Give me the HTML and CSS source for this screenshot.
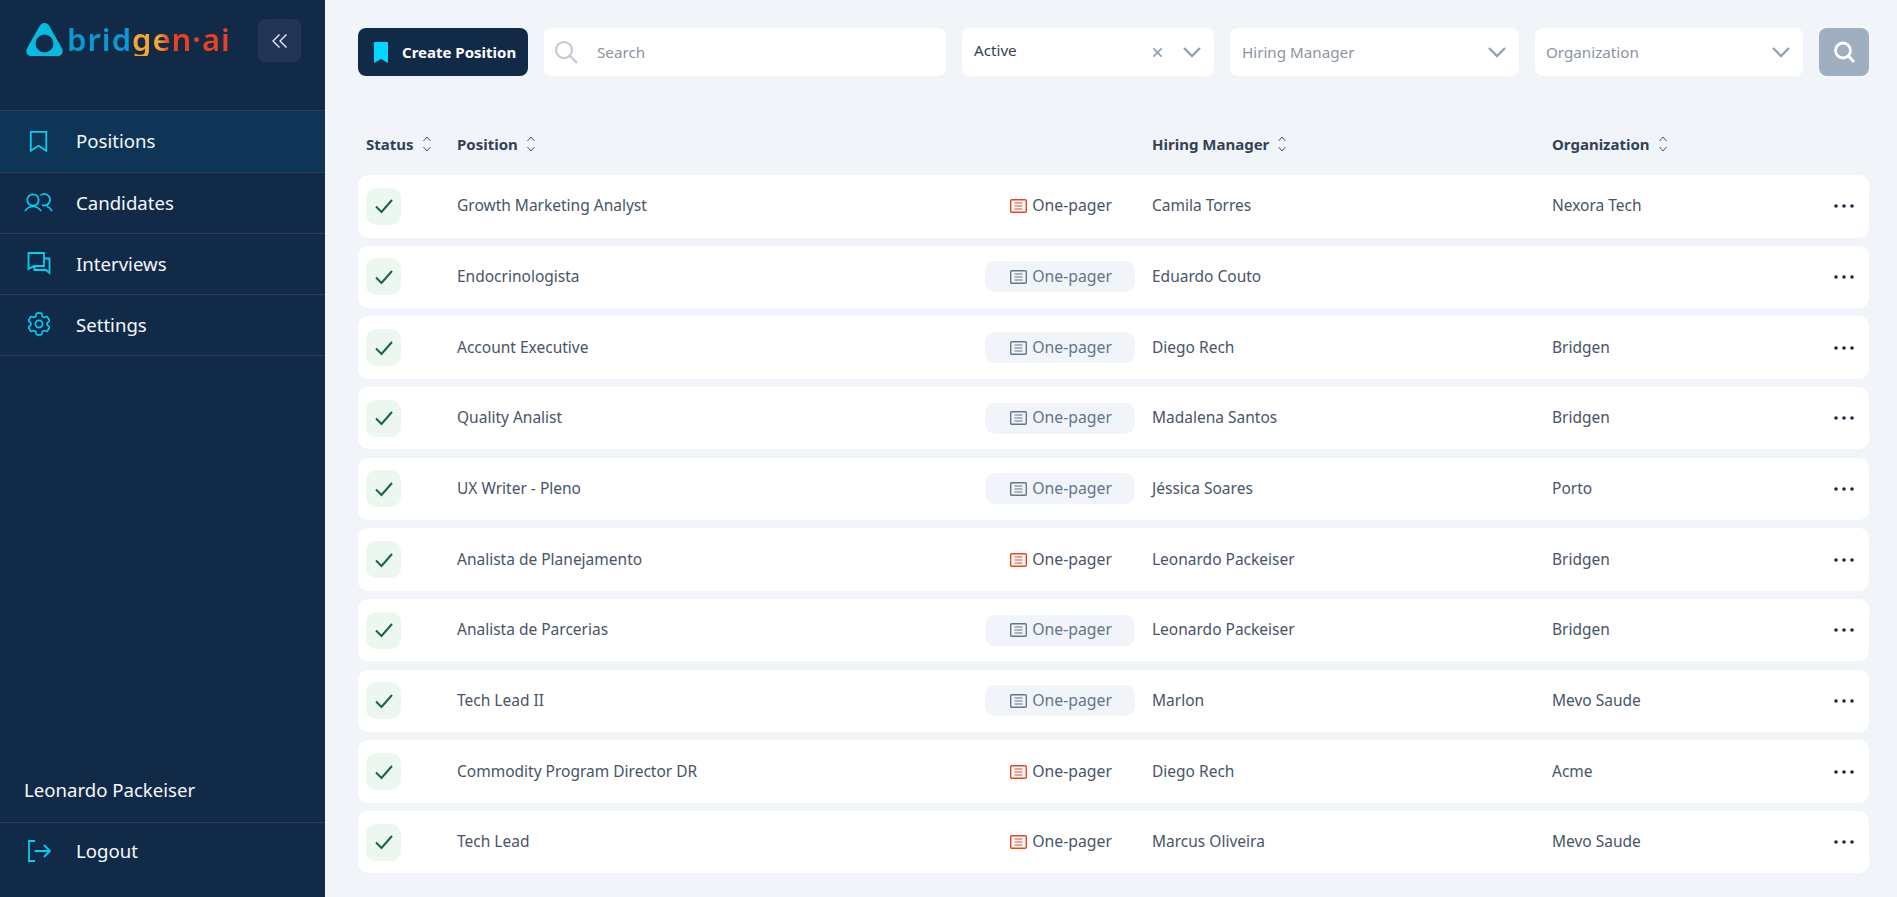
FILE: index.html
```html
<!DOCTYPE html>
<html>

<head>
	<meta charset="UTF-8">
	<title>Positions</title>
	<link rel="stylesheet" href="styles.css">
</head>

<body>
	<svg class="defs" width="0" height="0">
		<symbol id="sort" viewBox="0 0 10 18">
			<path d="M1.5 6L5 2l3.5 4M1.5 12L5 16l3.5-4" fill="none" stroke="currentColor" stroke-width="1" />
		</symbol>
		<symbol id="doc" viewBox="0 0 17 14">
			<rect x="0.7" y="0.7" width="15.6" height="12.6" rx="1" fill="none" stroke="currentColor" stroke-width="1.4" />
			<path d="M4.5 4h8M4.5 7h8M4.500 10h8" fill="none" stroke="currentColor" stroke-width="1.2" />
		</symbol>
		<symbol id="check" viewBox="0 0 20 20">
			<path d="M2 10.500l5.500 5.500L18 4" fill="none" stroke="currentColor" stroke-width="2" />
		</symbol>
		<symbol id="chev" viewBox="0 0 20 12">
			<path d="M2 2l8 8 8-8" fill="none" stroke="currentColor" stroke-width="2.4" />
		</symbol>
		<symbol id="dots" viewBox="0 0 20 4">
			<circle cx="2" cy="2" r="1.800" fill="currentColor" />
			<circle cx="10" cy="2" r="1.800" fill="currentColor" />
			<circle cx="18" cy="2" r="1.800" fill="currentColor" />
		</symbol>
	</svg>

	<div class="app">
		<aside class="sidebar">
			<div class="brand">
				<div class="logo">
					<svg class="logoMark" viewBox="0 0 37 33">
						<path fill-rule="evenodd" fill="#05bce0" d="M18.500 0c2.500 0 4 1.500 5 3.300L35.800 25c2 3.800.3 8-4.300 8H5.500c-4.600 0-6.300-4.200-4.300-8L13.500 3.300C14.500 1.500 16 0 18.500 0zM18.500 11.500a9 9 0 1 0 0 18 9 9 0 0 0 0-18z" />
					</svg>
					<span class="logoText">bridgen·ai</span>
				</div>
				<button class="collapseBtn">
					<svg viewBox="0 0 16 16" width="16" height="16">
						<path d="M7.500 1.500L1 8l6.500 6.500M14.500 1.500L8 8l6.500 6.500" fill="none" stroke="#f0f6fc" stroke-width="1.300" />
					</svg>
				</button>
			</div>

			<nav class="nav">
				<a class="navItem active">
					<svg class="navIcon" viewBox="0 0 24 24"><path d="M3.800 2.800h15.500v19l-7.750-5-7.750 5z" /></svg>
					Positions
				</a>
				<a class="navItem">
					<svg class="navIcon wide" viewBox="0 0 30 20">
						<circle cx="10" cy="8" r="5.700" />
						<path d="M2 19c2-3 5-4.500 8-4.500s6 1.500 8 4.500M17.500 3.400a5.700 5.700 0 1 1 1.500 9.600M24 14.500c2 .5 3.500 2 5 4.500" />
					</svg>
					Candidates
				</a>
				<a class="navItem">
					<svg class="navIcon" viewBox="0 0 24 24">
						<path d="M1.500 2H17v13H7l-5.500 3zM17 7.500h5.500V22L19 19H7.500v-4" />
					</svg>
					Interviews
				</a>
				<a class="navItem">
					<svg class="navIcon gear" viewBox="2 2 20 20">
						<path d="M9.594 3.940c.09-.542.56-.94 1.110-.94h2.593c.55 0 1.020.398 1.110.94l.213 1.281c.063.374.313.686.645.87.074.04.147.083.22.127.325.196.72.257 1.075.124l1.217-.456a1.125 1.125 0 0 1 1.370.49l1.296 2.247a1.125 1.125 0 0 1-.26 1.431l-1.003.827c-.293.241-.438.613-.43.992a7.723 7.723 0 0 1 0 .255c-.008.378.137.75.43.991l1.004.827c.424.35.534.955.26 1.430l-1.298 2.247a1.125 1.125 0 0 1-1.369.491l-1.217-.456c-.355-.133-.75-.072-1.076.124a6.470 6.470 0 0 1-.22.128c-.331.183-.581.495-.644.869l-.213 1.281c-.09.543-.56.94-1.110.94h-2.594c-.55 0-1.019-.398-1.110-.94l-.213-1.281c-.062-.374-.312-.686-.644-.87a6.520 6.520 0 0 1-.22-.127c-.325-.196-.72-.257-1.076-.124l-1.217.456a1.125 1.125 0 0 1-1.369-.49l-1.297-2.247a1.125 1.125 0 0 1 .26-1.431l1.004-.827c.292-.24.437-.613.43-.991a6.932 6.932 0 0 1 0-.255c.007-.38-.138-.751-.43-.992l-1.004-.827a1.125 1.125 0 0 1-.26-1.430l1.297-2.247a1.125 1.125 0 0 1 1.370-.491l1.216.456c.356.133.751.072 1.076-.124.072-.044.146-.086.22-.128.332-.183.582-.495.644-.869l.214-1.280Z" />
						<path d="M15 12a3 3 0 1 1-6 0 3 3 0 0 1 6 0Z" />
					</svg>
					Settings
				</a>
			</nav>

			<div class="sideFoot">
				<div class="userName">Leonardo Packeiser</div>
				<a class="navItem logout">
					<svg class="navIcon" viewBox="0 0 24 24"><path d="M8 2H2v20h6M7.500 12H23M17 6l6 6-6 6" /></svg>
					Logout
				</a>
			</div>
		</aside>

		<main class="main">
			<div class="toolbar">
				<button class="createBtn">
					<svg viewBox="0 0 14 22" width="14" height="22"><path fill="#00d8ff" d="M0 1h14v21l-7-4-7 4z" /></svg>
					Create Position
				</button>
				<div class="field searchField">
					<svg class="searchIcon" viewBox="0 0 24 24" width="24" height="24">
						<circle cx="10" cy="10" r="8" />
						<path d="M16 16l7 7" />
					</svg>
					<span class="placeholder">Search</span>
				</div>
				<div class="field selectActive">
					<span class="value">Active</span>
					<svg class="clear" viewBox="0 0 12 12" width="11" height="11"><path d="M1.500 1.500l9 9M10.500 1.500l-9 9" /></svg>
					<svg class="chev"><use href="#chev" /></svg>
				</div>
				<div class="field selectManager">
					<span class="placeholder">Hiring Manager</span>
					<svg class="chev"><use href="#chev" /></svg>
				</div>
				<div class="field selectOrg">
					<span class="placeholder">Organization</span>
					<svg class="chev"><use href="#chev" /></svg>
				</div>
				<button class="goBtn">
					<svg viewBox="0 0 24 24" width="24" height="24">
						<circle cx="11" cy="10.500" r="7.500" />
						<path d="M16.500 16l5.500 6" />
					</svg>
				</button>
			</div>

			<div class="tableHead">
				<div class="th">Status <svg class="sort"><use href="#sort" /></svg></div>
				<div class="th">Position <svg class="sort"><use href="#sort" /></svg></div>
				<div></div>
				<div class="th">Hiring Manager <svg class="sort"><use href="#sort" /></svg></div>
				<div class="th">Organization <svg class="sort"><use href="#sort" /></svg></div>
				<div></div>
			</div>

			<div class="rows">
				<div class="row">
					<div class="statusBox"><svg><use href="#check" /></svg></div>
					<div class="cell">Growth Marketing Analyst</div>
					<div class="pager"><svg><use href="#doc" /></svg>One-pager</div>
					<div class="cell">Camila Torres</div>
					<div class="cell">Nexora Tech</div>
					<svg class="more"><use href="#dots" /></svg>
				</div>
				<div class="row">
					<div class="statusBox"><svg><use href="#check" /></svg></div>
					<div class="cell">Endocrinologista</div>
					<div class="pager empty"><svg><use href="#doc" /></svg>One-pager</div>
					<div class="cell">Eduardo Couto</div>
					<div class="cell"></div>
					<svg class="more"><use href="#dots" /></svg>
				</div>
				<div class="row">
					<div class="statusBox"><svg><use href="#check" /></svg></div>
					<div class="cell">Account Executive</div>
					<div class="pager empty"><svg><use href="#doc" /></svg>One-pager</div>
					<div class="cell">Diego Rech</div>
					<div class="cell">Bridgen</div>
					<svg class="more"><use href="#dots" /></svg>
				</div>
				<div class="row">
					<div class="statusBox"><svg><use href="#check" /></svg></div>
					<div class="cell">Quality Analist</div>
					<div class="pager empty"><svg><use href="#doc" /></svg>One-pager</div>
					<div class="cell">Madalena Santos</div>
					<div class="cell">Bridgen</div>
					<svg class="more"><use href="#dots" /></svg>
				</div>
				<div class="row">
					<div class="statusBox"><svg><use href="#check" /></svg></div>
					<div class="cell">UX Writer - Pleno</div>
					<div class="pager empty"><svg><use href="#doc" /></svg>One-pager</div>
					<div class="cell">Jéssica Soares</div>
					<div class="cell">Porto</div>
					<svg class="more"><use href="#dots" /></svg>
				</div>
				<div class="row">
					<div class="statusBox"><svg><use href="#check" /></svg></div>
					<div class="cell">Analista de Planejamento</div>
					<div class="pager"><svg><use href="#doc" /></svg>One-pager</div>
					<div class="cell">Leonardo Packeiser</div>
					<div class="cell">Bridgen</div>
					<svg class="more"><use href="#dots" /></svg>
				</div>
				<div class="row">
					<div class="statusBox"><svg><use href="#check" /></svg></div>
					<div class="cell">Analista de Parcerias</div>
					<div class="pager empty"><svg><use href="#doc" /></svg>One-pager</div>
					<div class="cell">Leonardo Packeiser</div>
					<div class="cell">Bridgen</div>
					<svg class="more"><use href="#dots" /></svg>
				</div>
				<div class="row">
					<div class="statusBox"><svg><use href="#check" /></svg></div>
					<div class="cell">Tech Lead II</div>
					<div class="pager empty"><svg><use href="#doc" /></svg>One-pager</div>
					<div class="cell">Marlon</div>
					<div class="cell">Mevo Saude</div>
					<svg class="more"><use href="#dots" /></svg>
				</div>
				<div class="row">
					<div class="statusBox"><svg><use href="#check" /></svg></div>
					<div class="cell">Commodity Program Director DR</div>
					<div class="pager"><svg><use href="#doc" /></svg>One-pager</div>
					<div class="cell">Diego Rech</div>
					<div class="cell">Acme</div>
					<svg class="more"><use href="#dots" /></svg>
				</div>
				<div class="row">
					<div class="statusBox"><svg><use href="#check" /></svg></div>
					<div class="cell">Tech Lead</div>
					<div class="pager"><svg><use href="#doc" /></svg>One-pager</div>
					<div class="cell">Marcus Oliveira</div>
					<div class="cell">Mevo Saude</div>
					<svg class="more"><use href="#dots" /></svg>
				</div>
			</div>
		</main>
	</div>
</body>

</html>
```

FILE: styles.css
```css
* {
	box-sizing: border-box;
}

html, body {
	margin: 0;
	height: 100%;
}

body {
	background: #f1f5f9;
	font-family: "Noto Sans", "Open Sans", sans-serif;
	font-size: 15.500px;
	color: #475569;
	overflow: hidden;
}

.defs {
	position: absolute;
}

.app {
	display: flex;
	height: 897px;
}

.sidebar {
	width: 325px;
	flex: none;
	background: #112a47;
	color: #f4f8fc;
	display: flex;
	flex-direction: column;
}

.brand {
	height: 110px;
	padding: 19px 24px 0 26px;
	display: flex;
	justify-content: space-between;
	align-items: flex-start;
}

.logo {
	display: flex;
	align-items: flex-start;
	gap: 4px;
	padding-top: 4px;
}

.logoMark {
	width: 37px;
	height: 33px;
	flex: none;
}

.logoText {
	font-family: "Noto Sans", sans-serif;
	font-size: 31px;
	font-weight: 600;
	line-height: 33px;
	letter-spacing: 1px;
	background: linear-gradient(90deg, #0b99d3 0, #0b99d3 39.500%, #f5a531 40.500%, #f5a531 56%, #e8421f 62%, #e8421f 100%);
	-webkit-background-clip: text;
	background-clip: text;
	color: transparent;
}

.collapseBtn {
	width: 43px;
	height: 43px;
	border: none;
	border-radius: 7px;
	background: #243358;
	display: flex;
	align-items: center;
	justify-content: center;
	padding: 0;
}

.nav {
	border-top: 1px solid #2a4060;
}

.navItem {
	height: 61px;
	display: flex;
	align-items: center;
	gap: 25px;
	padding: 0 0 2px 27px;
	font-size: 18.600px;
	border-bottom: 1px solid #2a4060;
}

.navItem.active {
	background: #0e3555;
	height: 62px;
}

.navIcon {
	width: 24px;
	height: 24px;
	flex: none;
	fill: none;
	stroke: #04cdf2;
	stroke-width: 1.800;
}

.navIcon.wide {
	width: 30px;
	height: 20px;
	margin-left: -4px;
	margin-right: -2px;
	stroke-width: 1.700;
}

.navIcon.gear {
	stroke-width: 1.400;
}

.sideFoot {
	margin-top: auto;
}

.userName {
	height: 63px;
	padding: 0 0 3px 24px;
	display: flex;
	align-items: center;
	font-size: 18.600px;
	border-bottom: 1px solid #2a4060;
}

.logout {
	border-bottom: none;
	height: 74px;
	padding-bottom: 19px;
}

.main {
	flex: 1;
	padding: 28px 28px 0 33px;
	min-width: 0;
}

.toolbar {
	display: flex;
	gap: 16px;
	height: 48px;
}

.createBtn {
	width: 170px;
	flex: none;
	border: none;
	border-radius: 8px;
	background: #112a47;
	color: #fff;
	font: 700 15px "Noto Sans", sans-serif;
	display: flex;
	align-items: center;
	gap: 14px;
	padding: 0 0 1px 16px;
}

.field {
	background: #fff;
	border-radius: 8px;
	display: flex;
	align-items: center;
	padding: 0 12px;
	flex: none;
}

.searchField {
	width: 402px;
	padding-left: 10px;
}

.searchIcon {
	fill: none;
	stroke: #c3cad5;
	stroke-width: 2.200;
}

.placeholder {
	color: #8a94a3;
	font-size: 15.200px;
	padding-bottom: 1px;
}

.searchField .placeholder {
	margin-left: 19px;
}

.selectActive {
	width: 252px;
}

.selectManager {
	width: 289px;
}

.selectOrg {
	width: 268px;
	padding-left: 11px;
}

.value {
	color: #334155;
	font-size: 15.200px;
	padding-bottom: 4px;
}

.clear {
	margin-left: auto;
	margin-right: 19px;
	fill: none;
	stroke: #94a3b8;
	stroke-width: 2;
}

.chev {
	width: 20px;
	height: 12px;
	color: #94a3b8;
	margin-left: auto;
}

.clear + .chev {
	margin-left: 0;
}

.goBtn {
	width: 50px;
	flex: none;
	border: none;
	border-radius: 8px;
	background: #a0aec2;
	display: flex;
	align-items: center;
	justify-content: center;
	padding: 0;
}

.goBtn svg {
	fill: none;
	stroke: #fff;
	stroke-width: 2.800;
}

.tableHead,
.row {
	display: grid;
	grid-template-columns: 91px 528px 167px 400px 1fr 50px;
	align-items: center;
	padding-left: 8px;
}

.tableHead {
	height: 99px;
	padding-top: 37px;
}

.th {
	font-size: 15px;
	font-weight: 700;
	color: #334155;
	display: flex;
	align-items: center;
	gap: 8px;
}

.sort {
	width: 10px;
	height: 18px;
	color: #475569;
}

.rows {
	display: flex;
	flex-direction: column;
	gap: 8.170px;
}

.row {
	height: 62.500px;
	background: #fff;
	border-radius: 10px;
}

.cell {
	padding-bottom: 2px;
}

.statusBox {
	width: 35px;
	height: 37px;
	border-radius: 10px;
	background: #ecf8ef;
	color: #14693a;
	display: flex;
	align-items: center;
	justify-content: center;
}

.statusBox svg {
	width: 20px;
	height: 20px;
}

.pager {
	width: 150px;
	height: 31px;
	border-radius: 10px;
	display: flex;
	align-items: center;
	justify-content: flex-end;
	gap: 5px;
	padding: 0 23px 2px 0;
	font-size: 15.800px;
	color: #475569;
}

.pager svg {
	width: 17px;
	height: 14px;
	margin-top: 2px;
	color: #e8421f;
}

.pager.empty {
	background: #f1f5f9;
	color: #64748b;
}

.pager.empty svg {
	color: #64748b;
}

.more {
	width: 20px;
	height: 4px;
	color: #1e293b;
	justify-self: center;
}
```
